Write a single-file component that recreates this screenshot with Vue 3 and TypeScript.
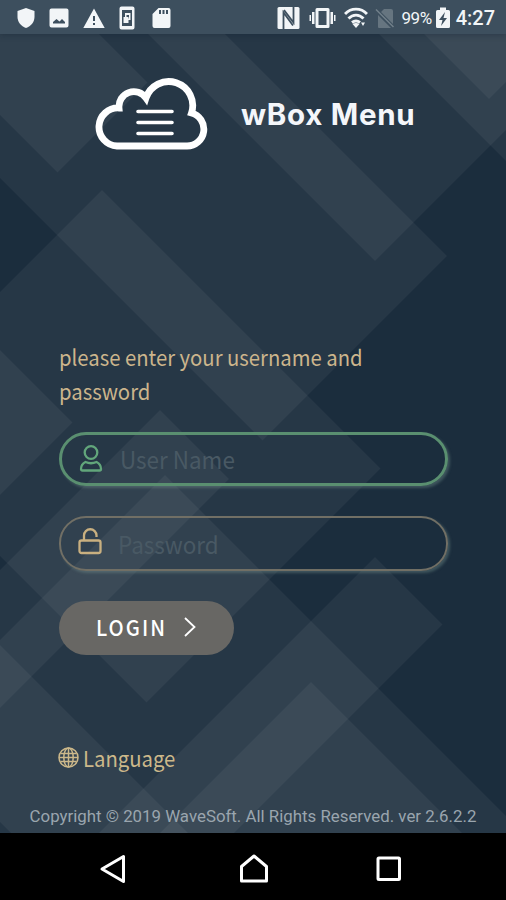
<script setup lang="ts">
import { ref } from 'vue'

const username = ref('')
const password = ref('')

// Each translucent panel is a rectangle turned by 45°, bounded by
// sum = x + y and diff = x - y.
interface Panel { sum: [number, number]; diff: [number, number] }

const panels: Panel[] = [
  { sum: [-400, 703], diff: [-178, 191] },
  { sum: [-400, 636], diff: [114, 900] },
  { sum: [-400, 1400], diff: [345, 900] },
  { sum: [-400, 588], diff: [390, 900] },
  { sum: [-400, 230], diff: [-115, 65] },
  { sum: [292, 849], diff: [-556, -88] },
  { sum: [-400, 495], diff: [-900, -350] },
  { sum: [570, 708], diff: [-1200, -250] },
  { sum: [640, 1900], diff: [-822, -310] },
  { sum: [400, 1900], diff: [-1200, -645] },
  { sum: [932, 1067], diff: [-1200, -182] },
  { sum: [993, 1900], diff: [-1200, -371] },
]

const corners = ({ sum, diff }: Panel): string =>
  [[sum[0], diff[0]], [sum[0], diff[1]], [sum[1], diff[1]], [sum[1], diff[0]]]
    .map(([s, d]) => `${(s + d) / 2},${(s - d) / 2}`)
    .join(' ')
</script>

<template>
  <div class="phone">
    <svg class="backdrop" viewBox="0 0 506 834" aria-hidden="true">
      <polygon v-for="(p, i) in panels" :key="i" :points="corners(p)" />
    </svg>

    <header class="status">
      <div class="notices">
        <svg width="18" height="22" viewBox="0 0 18 22"><path d="M9 1 17.500 4v6c0 5-3.500 9-8.500 11C4 19 .5 15 .5 10V4z" /></svg>
        <svg width="20" height="22" viewBox="0 0 20 22"><path fill-rule="evenodd" d="M2.500 1.500h15a2 2 0 0 1 2 2v15a2 2 0 0 1-2 2h-15a2 2 0 0 1-2-2v-15a2 2 0 0 1 2-2zM4 16.500h12V15l-3-3-2.500 2.500L7.500 12 4 15z" /></svg>
        <svg width="22" height="22" viewBox="0 0 22 22"><path fill-rule="evenodd" d="M11 1.500 21.700 21H.3zM10 9v5h2V9zM10 16v2h2v-2z" /></svg>
        <svg width="16" height="24" viewBox="0 0 16 24"><path fill-rule="evenodd" d="M2.500.5h11a2 2 0 0 1 2 2v19a2 2 0 0 1-2 2h-11a2 2 0 0 1-2-2v-19a2 2 0 0 1 2-2zM3 4v16h10V4zM6 7h5.500v7h-2v3H4.500v-6H6zM7.500 9v2h2v1.500H10V9z" /></svg>
        <svg width="19" height="22" viewBox="0 0 19 22"><path fill-rule="evenodd" d="M6.500 1h10a2 2 0 0 1 2 2v16a2 2 0 0 1-2 2h-14a2 2 0 0 1-2-2V7zM7 3v4h2V3zM10.500 3v4h2V3zM14 3v4h2V3z" /></svg>
      </div>
      <div class="system">
        <svg class="nfc" width="23" height="24" viewBox="0 0 23 24"><rect x=".5" y="1" width="22" height="22" rx="1.500" /><path d="M6.500 23V6.500L16 19.500M16.500 1v15.500L7 4" fill="none" stroke="#3d4f5e" stroke-width="1.800" /></svg>
        <svg class="vibrate" width="27" height="22" viewBox="0 0 27 22"><path fill-rule="evenodd" d="M8 1h11a1.500 1.500 0 0 1 1.500 1.500v17A1.500 1.500 0 0 1 19 21H8a1.500 1.500 0 0 1-1.500-1.500v-17A1.500 1.500 0 0 1 8 1zM9.500 4v14h8V4zM3 5h2.500v12H3zM21.500 5H24v12h-2.500zM.5 8H2v6H.5zM25 8h1.500v6H25z" /></svg>
        <svg class="wifi" width="24" height="22" viewBox="0 0 24 22"><g fill="none" stroke="#f2f5f7" stroke-width="2.900"><path d="M1 7c6-6.500 16-6.500 22 0M4.500 11.500c4.500-4.500 10.500-4.500 15 0M8 15.500c2.500-2 5.500-2 8 0" /></g><path d="m8.500 17 3.500 4 3.500-4q-3.500-2-7 0zM17 15.500h4l-2 3.500z" /></svg>
        <svg class="sim" width="20" height="22" viewBox="0 0 20 22"><path d="M9 2h7a2 2 0 0 1 2 2v13L6 5zM3 8l13 13H4a1 1 0 0 1-1-1z" /><path d="M1 2.500 18.500 20" fill="none" stroke="#73818b" stroke-width="1.500" /></svg>
        <span class="percent">99%</span>
        <svg class="battery" width="14" height="22" viewBox="0 0 14 22"><path fill-rule="evenodd" d="M4 .5h6V3h2.500A1.500 1.500 0 0 1 14 4.500v15a1.500 1.500 0 0 1-1.500 1.500h-11A1.500 1.500 0 0 1 0 19.500v-15A1.500 1.500 0 0 1 1.500 3H4zM9 5l-6 8h3.500L5 19l6-8H7.500z" /></svg>
        <span class="clock">4:27</span>
      </div>
    </header>

    <main class="login">
      <div class="brand">
        <svg class="cloud" width="114" height="74" viewBox="0 0 114 74" fill="none" stroke="#fff">
          <path stroke-width="6.800" stroke-linejoin="miter" d="M22 69A19 19 0 0 1 24 31A14.900 14.900 0 0 1 51 21A23.500 23.500 0 0 1 96.500 36A16.800 16.800 0 0 1 92 69z" />
          <path stroke-width="3.600" stroke-linecap="round" d="M43 34.500h34M43 45.500h34M43 56.500h34" />
        </svg>
        <h1>wBox Menu</h1>
      </div>

      <form class="form" @submit.prevent>
        <p class="prompt">please enter your username and password</p>
        <label class="field user">
          <svg width="24" height="28" viewBox="0 0 24 28" fill="none" stroke="#62a67b" stroke-width="2.300"><circle cx="12" cy="7.500" r="6.300" /><path stroke-linejoin="round" d="M6.500 17q5.500 2.500 11 0c3 1.500 4.500 4 4.500 7 0 1-.5 1.500-1.500 1.500h-17C2.500 25.500 2 25 2 24c0-3 1.500-5.500 4.500-7z" /></svg>
          <input v-model="username" type="text" placeholder="User Name" />
        </label>
        <label class="field pass">
          <svg width="24" height="28" viewBox="0 0 24 28" fill="none" stroke="#c9b080" stroke-width="2.300"><rect x="1.500" y="13.500" width="21" height="12.500" rx="2" /><path d="M6 13V8.500a6 6 0 0 1 12.500 0V10" /></svg>
          <input v-model="password" type="password" placeholder="Password" />
        </label>
        <button class="submit" type="submit">
          <span>LOGIN</span>
          <svg width="12" height="20" viewBox="0 0 12 20" fill="none" stroke="#fff" stroke-width="1.800"><path d="m1 1 9.500 9L1 19" /></svg>
        </button>
      </form>

      <a class="language">
        <svg width="21" height="21" viewBox="0 0 21 21" fill="none" stroke="#ccb88a" stroke-width="1.500"><circle cx="10.500" cy="10.500" r="9.500" /><ellipse cx="10.500" cy="10.500" rx="4.700" ry="9.500" /><path d="M10.500 1v19M2.500 6.500h16M2.500 14.500h16M1 10.500h19" /></svg>
        <span>Language</span>
      </a>
      <footer class="legal">Copyright © 2019 WaveSoft. All Rights Reserved. ver 2.6.2.2</footer>
    </main>

    <nav class="system-nav">
      <svg width="28" height="30" viewBox="0 0 28 30"><path d="M24.500 2.500v25L3 15z" /></svg>
      <svg width="30" height="30" viewBox="0 0 30 30"><path d="M2.500 27V12.500L15 2l12.500 10.500V27z" /></svg>
      <svg width="28" height="28" viewBox="0 0 28 28"><rect x="3" y="3" width="21.500" height="21.500" rx="1" /></svg>
    </nav>
  </div>
</template>

<style>
body { margin: 0; background: #000; }
</style>

<style scoped>
.phone {
  position: relative;
  display: flex;
  flex-direction: column;
  width: 506px;
  height: 900px;
  overflow: hidden;
  background: #1b2d3d;
  font-family: "Noto Sans CJK SC", "Noto Sans", sans-serif;
}
.backdrop {
  position: absolute;
  top: 0;
  left: 0;
  width: 506px;
  height: 834px;
  fill: rgba(255, 255, 255, 0.052);
}
.status {
  position: relative;
  display: flex;
  justify-content: space-between;
  align-items: center;
  box-sizing: border-box;
  height: 34px;
  padding: 1px 11px 0 17px;
  background: #3d4f5e;
  box-shadow: 0 1px 6px rgba(15, 30, 45, 0.35);
  color: #f2f5f7;
  fill: #f2f5f7;
  font-family: Roboto, sans-serif;
}
.notices, .system { display: flex; align-items: center; }
.notices { gap: 14px; }
.notices svg:nth-child(4) { margin: 0 3px 0 0; }
.vibrate { margin-left: 9px; }
.wifi { margin-left: 8px; }
.sim { margin-left: 7px; fill: #667580; }
.percent { margin-left: 7px; font-size: 17px; letter-spacing: -0.500px; }
.battery { margin-left: 4px; }
.clock { margin-left: 6px; font-size: 20px; font-weight: 500; }
.login {
  position: relative;
  display: flex;
  flex-direction: column;
  height: 799px;
  flex: none;
}
.brand {
  display: flex;
  align-items: center;
  height: 74px;
  margin: 43px 0 0 95px;
}
h1 {
  margin: 0 0 0 32px;
  color: #f4f6fa;
  font: 700 29.500px/36px Inter, sans-serif;
  letter-spacing: 0.700px;
}
.form { margin: 189px 58px 0 59px; }
.prompt {
  margin: 0 0 25px;
  width: 360px;
  color: #ccb58c;
  font-size: 22px;
  line-height: 33.500px;
  transform: scaleX(0.922);
  transform-origin: left;
}
.field {
  display: flex;
  align-items: center;
  box-sizing: border-box;
  height: 54px;
  padding-left: 17px;
  border: 3px solid #5a8f70;
  border-radius: 27px;
  box-shadow: 2px 2px 3px rgba(120, 150, 145, 0.4);
}
.pass {
  height: 55px;
  margin-top: 30px;
  border: 2px solid #716f65;
  padding-left: 17px;
}
.field svg { flex: none; }
.pass svg { margin-bottom: 6px; }
.field input {
  min-width: 0;
  flex: 1;
  padding: 0;
  margin-left: 17px;
  border: 0;
  outline: 0;
  background: none;
  color: #ccb58c;
  font: 24px/38px "Noto Sans CJK SC", sans-serif;
  transform: scaleX(0.935);
  transform-origin: left;
}
.pass input { margin-left: 16px; }
.field input::placeholder { color: #495964; opacity: 1; }
.submit {
  display: flex;
  align-items: center;
  width: 175px;
  height: 54px;
  margin-top: 30px;
  padding: 0 0 3px 37px;
  border: 0;
  border-radius: 27px;
  background: #686764;
  color: #fff;
  font: 500 22px/33px "Noto Sans CJK SC", sans-serif;
  letter-spacing: 2.200px;
}
.submit span {
  width: 71px;
  transform: scaleX(0.915);
  transform-origin: left;
}
.submit svg { margin: 1px 0 0 17px; }
.language {
  display: flex;
  align-items: center;
  gap: 4px;
  height: 33px;
  margin: 86px 0 0 58px;
  color: #ccb88a;
  font-size: 22px;
}
.language span {
  margin-top: -1px;
  transform: scaleX(0.922);
  transform-origin: left;
}
.legal {
  margin-top: 31px;
  text-align: center;
  color: #9aa5ae;
  font: 16.850px/22px Roboto, sans-serif;
  white-space: nowrap;
}
.system-nav {
  position: relative;
  display: flex;
  align-items: center;
  gap: 108px;
  flex: 1;
  padding: 4px 0 0 99px;
  background: #000;
  fill: none;
  stroke: #fff;
  stroke-width: 3px;
  stroke-linejoin: round;
}
.system-nav svg:nth-child(2) { margin-left: 4px; }
.system-nav svg:nth-child(3) { margin-left: -2px; }
</style>
